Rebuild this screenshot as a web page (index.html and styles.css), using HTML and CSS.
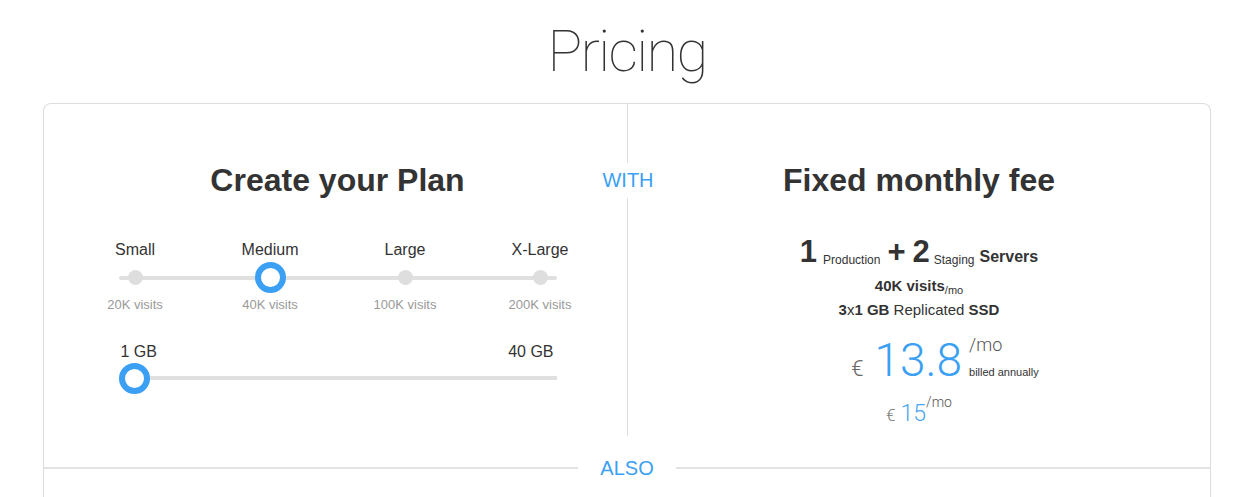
FILE: index.html
```html
<!DOCTYPE html>
<html lang="en">
<head>
<meta charset="utf-8">
<title>Pricing</title>
<link rel="stylesheet" href="styles.css">
</head>
<body>
<div class="page">
  <h1 class="title">Pricing</h1>
  <div class="card">
    <div class="plans">
      <section class="plan plan-create">
        <h2 class="plan-heading">Create your Plan</h2>
        <div class="scale">
          <div class="step"><span class="step-label">Small</span><span class="step-dot-row"><span class="dot"></span></span><span class="step-visits">20K visits</span></div>
          <div class="step"><span class="step-label">Medium</span><span class="step-dot-row"><span class="knob"></span></span><span class="step-visits">40K visits</span></div>
          <div class="step"><span class="step-label">Large</span><span class="step-dot-row"><span class="dot"></span></span><span class="step-visits">100K visits</span></div>
          <div class="step"><span class="step-label">X-Large</span><span class="step-dot-row"><span class="dot"></span></span><span class="step-visits">200K visits</span></div>
        </div>
        <div class="storage">
          <div class="storage-labels"><span>1 GB</span><span>40 GB</span></div>
          <div class="storage-track"><span class="knob"></span></div>
        </div>
      </section>
      <section class="plan plan-fixed">
        <span class="with">WITH</span>
        <h2 class="plan-heading">Fixed monthly fee</h2>
        <div class="servers"><span class="big n1">1</span><span class="small-word sw1">Production</span><span class="big plus">+</span><span class="big n2">2</span><span class="small-word sw2">Staging</span><span class="servers-word">Servers</span></div>
        <div class="spec spec-visits"><b>40K visits</b><span class="per">/mo</span></div>
        <div class="spec spec-ssd"><b>3</b>x<b>1 GB</b> Replicated <b>SSD</b></div>
        <div class="price"><span class="currency">€</span><span class="amount">13.8</span><span class="suffix"><span class="suffix-mo">/mo</span><span class="suffix-billed">billed annually</span></span></div>
        <div class="price-monthly"><span class="currency-sm">€</span><span class="amount-sm">15</span><span class="mo-sm">/mo</span></div>
      </section>
    </div>
    <div class="also-row">
      <span class="also">ALSO</span>
    </div>
    <div class="card-rest"></div>
  </div>
</div>
</body>
</html>
```

FILE: styles.css
```css
* { box-sizing: border-box; }

html, body {
  margin: 0;
  padding: 0;
  background: #ffffff;
}

body {
  font-family: "Liberation Sans", Arial, sans-serif;
  color: #333333;
}

.page {
  width: 1234px;
  padding-left: 43px;
  padding-right: 23px;
}

.title {
  margin: 0;
  padding-top: 21px;
  height: 103px;
  text-align: center;
  font-family: Roboto, "Liberation Sans", sans-serif;
  font-weight: 100;
  font-size: 58px;
  letter-spacing: -1.7px;
  line-height: 60px;
  color: #333333;
}

.card {
  border: 1px solid #dedede;
  border-bottom: none;
  border-radius: 8px 8px 0 0;
}

.plans {
  display: grid;
  grid-template-columns: 583px 1fr;
  height: 332px;
}

.plan {
  position: relative;
  padding-top: 57px;
  text-align: center;
}

.plan-create {
  padding-left: 4px;
}

.plan-fixed {
  border-left: 1px solid #dedede;
}

.plan-heading {
  margin: 0;
  font-size: 32px;
  line-height: 38px;
  font-weight: bold;
  color: #333333;
}

.with {
  position: absolute;
  left: -30px;
  top: 59px;
  width: 60px;
  background: #ffffff;
  font-size: 20px;
  line-height: 35px;
  color: #3b9ff3;
  text-align: center;
}

/* size scale */
.scale {
  position: relative;
  width: 540px;
  display: grid;
  grid-template-columns: repeat(4, 135px);
  margin: 41px auto 0 auto;
}

.scale::before {
  content: "";
  position: absolute;
  left: 51px;
  right: 51px;
  top: 36px;
  height: 4px;
  border-radius: 2px;
  background: #e0e0e0;
}

.step {
  display: flex;
  flex-direction: column;
  align-items: center;
}

.step-label {
  font-size: 16px;
  line-height: 20px;
  color: #333333;
}

.step-dot-row {
  position: relative;
  height: 32px;
  margin-top: 1px;
  display: flex;
  align-items: center;
  justify-content: center;
}

.dot {
  width: 15px;
  height: 15px;
  border-radius: 50%;
  background: #dedede;
}

.knob {
  width: 31px;
  height: 31px;
  border-radius: 50%;
  border: 6px solid #3b9ff3;
  background: #ffffff;
  position: relative;
}

.step-visits {
  margin-top: 4px;
  font-size: 13px;
  line-height: 16px;
  color: #999999;
}

/* storage slider */
.storage {
  width: 438px;
  margin: 29px auto 0 auto;
}

.storage-labels {
  display: flex;
  justify-content: space-between;
  padding: 0 3px 0 2px;
  font-size: 16px;
  line-height: 20px;
  color: #333333;
}

.storage-track {
  height: 32px;
  display: flex;
  align-items: center;
  background: linear-gradient(#e0e0e0, #e0e0e0) no-repeat center / 100% 4px;
}

/* fixed fee */
.servers {
  margin-top: 33px;
  font-size: 31px;
  line-height: 40px;
  font-weight: bold;
  color: #333333;
  white-space: nowrap;
}

.small-word {
  font-size: 12px;
  font-weight: normal;
  vertical-align: -2px;
}

.n1 { margin-right: 6px; }
.sw1 { margin-right: 7px; }
.plus { margin-right: 7px; }
.n2 { margin-right: 4px; }
.sw2 { margin-right: 5px; }

.servers-word {
  font-size: 16px;
}

.spec {
  font-size: 15px;
  line-height: 22px;
  color: #333333;
}

.spec-visits {
  margin-top: -5px;
}

.spec-ssd {
  margin-top: 2px;
}

.per {
  font-size: 11px;
  vertical-align: -3px;
  line-height: 10px;
}

.price {
  margin-top: 14px;
  padding-left: 52px;
  text-align: center;
  height: 50px;
  line-height: 50px;
  white-space: nowrap;
}

.currency {
  font-family: Roboto, "Liberation Sans", sans-serif;
  font-weight: 300;
  font-size: 22px;
  color: #666666;
  margin-right: 11px;
}

.amount {
  font-family: Roboto, "Liberation Sans", sans-serif;
  font-weight: 300;
  font-size: 46px;
  color: #3b9ff3;
  margin-right: 7px;
}

.suffix {
  display: inline-block;
  text-align: left;
  line-height: normal;
  vertical-align: baseline;
}

.suffix-mo {
  display: block;
  font-family: Roboto, "Liberation Sans", sans-serif;
  font-weight: 300;
  font-size: 18px;
  line-height: 14px;
  color: #555555;
}

.suffix-billed {
  display: block;
  font-size: 11px;
  line-height: 12px;
  padding-top: 14px;
  color: #333333;
}

.price-monthly {
  margin-top: 12px;
  line-height: 30px;
  white-space: nowrap;
  text-align: center;
}

.currency-sm {
  font-family: Roboto, "Liberation Sans", sans-serif;
  font-weight: 300;
  font-size: 17px;
  color: #777777;
  margin-right: 5px;
}

.amount-sm {
  font-family: Roboto, "Liberation Sans", sans-serif;
  font-weight: 300;
  font-size: 23px;
  color: #4aa6f3;
}

.mo-sm {
  font-family: Roboto, "Liberation Sans", sans-serif;
  font-weight: 300;
  font-size: 14px;
  color: #555555;
  vertical-align: 14px;
  line-height: 10px;
}

/* also separator */
.also-row {
  display: flex;
  align-items: center;
  gap: 22px;
  margin-top: 20px;
}

.also-row::before,
.also-row::after {
  content: "";
  flex: 1;
  height: 2px;
  background: #e3e3e3;
}

.also {
  font-size: 20px;
  line-height: 24px;
  color: #3b9ff3;
}

.card-rest {
  height: 60px;
}
```
